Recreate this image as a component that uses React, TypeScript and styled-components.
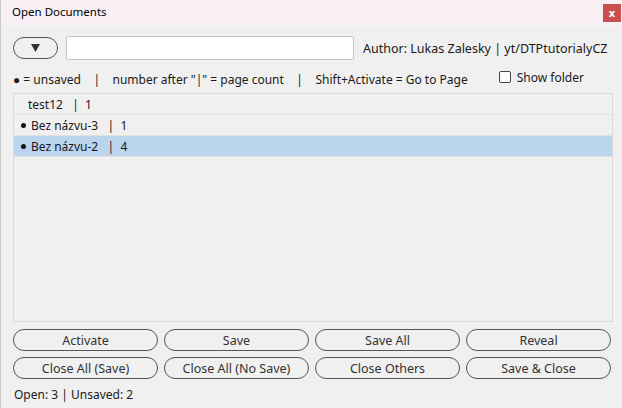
import React from "react";
import styled, { createGlobalStyle } from "styled-components";

const Global = createGlobalStyle`
  html, body { margin: 0; padding: 0; background: #f0f0f0; }
  * { box-sizing: border-box; }
`;

const Window = styled.div`
  width: 622px;
  height: 408px;
  background: #f0f0f0;
  border-left: 1px solid #c8c8c8;
  font-family: "Noto Sans", "Open Sans", sans-serif;
  font-size: 12px;
  color: #1a1a1a;
  display: flex;
  flex-direction: column;
  overflow: hidden;
`;

const TitleBar = styled.div`
  height: 26px;
  background: #f9f0f5;
  display: flex;
  align-items: flex-start;
  justify-content: space-between;
  padding: 4px 1px 0 11px;
`;

const Title = styled.span`
  font-size: 11.5px;
  line-height: 16px;
  color: #000;
`;

const CloseBtn = styled.div`
  width: 18px;
  height: 18px;
  background: #c9504f;
  color: #fff;
  font-size: 11px;
  font-weight: bold;
  display: flex;
  align-items: center;
  justify-content: center;
  line-height: 1;
  padding-bottom: 2px;
`;

const Body = styled.div`
  flex: 1;
  display: flex;
  flex-direction: column;
  padding: 10px 10px 0 12px;
`;

const TopRow = styled.div`
  display: flex;
  align-items: center;
  height: 24px;
`;

const DropBtn = styled.div`
  width: 45px;
  height: 22px;
  flex-shrink: 0;
  border: 1px solid #555;
  border-radius: 11px;
  display: flex;
  align-items: center;
  justify-content: center;
`;

const TextInput = styled.div`
  width: 288px;
  height: 24px;
  flex-shrink: 0;
  margin-left: 8px;
  background: #fff;
  border: 1px solid #c4c4c4;
  border-radius: 2px;
`;

const Author = styled.span`
  margin-left: 9px;
  font-size: 12.5px;
  white-space: nowrap;
`;

const LegendRow = styled.div`
  display: flex;
  align-items: center;
  height: 24px;
  margin-top: 5px;
`;

const Legend = styled.span`
  margin-top: 4px;
  white-space: pre;
`;

const CheckWrap = styled.label`
  display: flex;
  align-items: center;
  margin-left: 31px;
  gap: 6px;
`;

const Box = styled.span`
  width: 12px;
  height: 12px;
  border: 1px solid #444;
  border-radius: 2px;
  background: #fff;
`;

const List = styled.div`
  margin-top: 4px;
  height: 229px;
  width: 600px;
  border: 1px solid #dadada;
  background: #f0f0f0;
  display: flex;
  flex-direction: column;
`;

const Row = styled.div<{ $selected?: boolean }>`
  height: 21px;
  display: flex;
  align-items: center;
  padding-left: 5px;
  border-bottom: 1px solid #e2e2e2;
  background: ${(p) => (p.$selected ? "#bcd5ee" : "transparent")};
  white-space: pre;
`;

const Dot = styled.span<{ $show: boolean }>`
  display: inline-block;
  width: 5px;
  height: 5px;
  border-radius: 50%;
  background: ${(p) => (p.$show ? "#111" : "transparent")};
  margin: ${(p) => (p.$show ? "0 5px 0 2px" : "0 2px 0 2px")};
`;

const ButtonGrid = styled.div`
  display: grid;
  grid-template-columns: repeat(4, 145px);
  column-gap: 6px;
  row-gap: 6px;
  margin-top: 7px;
`;

const Btn = styled.div`
  height: 22px;
  border: 1px solid #555;
  border-radius: 11px;
  display: flex;
  align-items: center;
  justify-content: center;
  color: #333;
  font-size: 12.5px;
`;

const Status = styled.div`
  margin-top: 7px;
  padding-left: 1px;
`;

const docs = [
  { name: "test12", pages: 1, unsaved: false },
  { name: "Bez názvu-3", pages: 1, unsaved: true },
  { name: "Bez názvu-2", pages: 4, unsaved: true },
];

const buttons = [
  "Activate",
  "Save",
  "Save All",
  "Reveal",
  "Close All (Save)",
  "Close All (No Save)",
  "Close Others",
  "Save & Close",
];

export default function App() {
  return (
    <>
      <Global />
      <Window>
        <TitleBar>
          <Title>Open Documents</Title>
          <CloseBtn>x</CloseBtn>
        </TitleBar>
        <Body>
          <TopRow>
            <DropBtn>
              <svg width="9" height="8" viewBox="0 0 9 8">
                <path d="M0 0 H9 L4.5 8 Z" fill="#333" />
              </svg>
            </DropBtn>
            <TextInput />
            <Author>Author: Lukas Zalesky | yt/DTPtutorialyCZ</Author>
          </TopRow>
          <LegendRow>
            <Legend>{'● = unsaved    |    number after "|" = page count    |    Shift+Activate = Go to Page'}</Legend>
            <CheckWrap>
              <Box />
              <span>Show folder</span>
            </CheckWrap>
          </LegendRow>
          <List>
            {docs.map((d, i) => (
              <Row key={d.name} $selected={i === 2}>
                <Dot $show={d.unsaved} />
                {`${d.name}   |  ${d.pages}`}
              </Row>
            ))}
          </List>
          <ButtonGrid>
            {buttons.map((b) => (
              <Btn key={b}>{b}</Btn>
            ))}
          </ButtonGrid>
          <Status>Open: 3 | Unsaved: 2</Status>
        </Body>
      </Window>
    </>
  );
}
